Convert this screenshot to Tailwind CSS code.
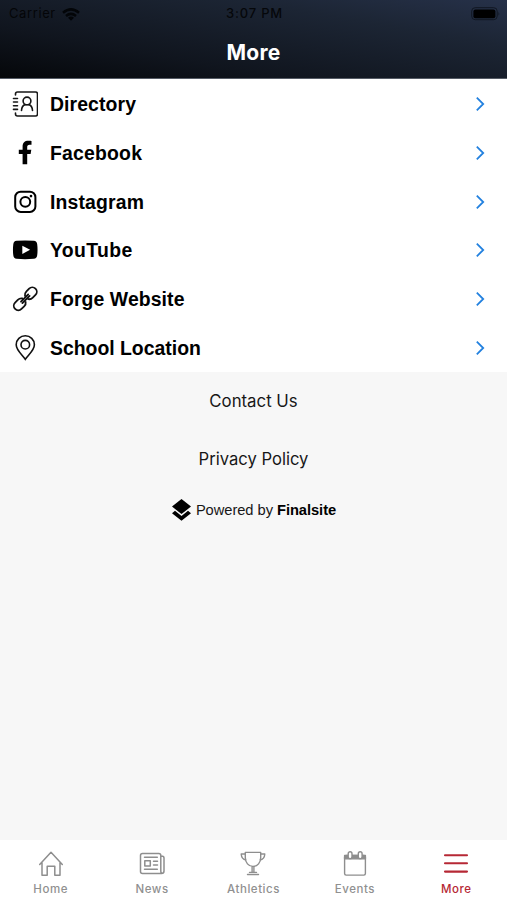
<!DOCTYPE html>
<html lang="en">
<head>
<meta charset="utf-8">
<meta name="viewport" content="width=device-width, initial-scale=1">
<title>More</title>
<script src="https://cdn.jsdelivr.net/npm/@tailwindcss/browser@4"></script>
</head>
<body class="h-[900px] w-[507px] overflow-hidden bg-[#f7f7f7] font-['Inter','Liberation_Sans',sans-serif] text-black">
<div class="flex h-full flex-col">
  <header class="h-[79px] shrink-0 border-b border-[#555b65] bg-[linear-gradient(10deg,#05070a_0%,#10151e_30%,#1c2534_72%,#263149_100%)]">
    <div class="grid h-[28px] grid-cols-3 items-center pl-[9px] pr-[7px] text-[13px] text-black/80">
      <div class="flex items-center gap-[6px]"><span class="tracking-[0.6px]">Carrier</span>
        <svg class="h-[13px] w-[18px]" viewBox="0 0 18 13" fill="none" stroke="#030508" stroke-width="2.5"><path d="M1 4.8Q9-2 17 4.8M4 8Q9 3.8 14 8"/><path d="m6 9.8 3 3 3-3Q9 7.4 6 9.8Z" fill="#030508" stroke="none"/></svg>
      </div>
      <div class="text-center font-medium tracking-[0.8px]">3:07 PM</div>
      <div class="flex justify-end"><svg class="h-[14px] w-[29px]" viewBox="0 0 29 14"><rect x=".7" y=".7" width="25.5" height="12" rx="3.5" fill="none" stroke="#111722"/><rect x="2.4" y="2.4" width="22" height="8.8" rx="2" fill="#000"/><path d="M27.5 4.8q1.5 2 0 4z" fill="#111722"/></svg></div>
    </div>
    <h1 class="pt-[11px] text-center font-['Inter'] text-[21px] leading-[28px] font-bold tracking-[0.2px] text-white">More</h1>
  </header>
  <nav class="grid h-[293px] shrink-0 grid-rows-6 bg-white pt-px font-['Liberation_Sans',Arial,sans-serif] text-[19.4px] leading-6 font-bold">
    <a class="flex items-center pl-[12px] pr-[20px]"><svg class="mr-[12px] size-[26px]" viewBox="0 0 26 26" fill="none" stroke="#161616" stroke-width="1.6" stroke-linecap="round" stroke-linejoin="round"><path d="M3.5 4V3q0-2 2-2h18q2 0 2 2v20q0 2-2 2h-18q-2 0-2-2v-1M1.5 7.5h4M1.5 11h4M1.5 14.7h4M1.5 18.4h4"/><circle cx="15" cy="10" r="3.9"/><path d="M9.5 19.5q.2-5 3.8-5.9M16.7 13.6q3.6.9 3.8 5.9"/></svg><span class="flex-1 tracking-[0.1px]">Directory</span><svg class="h-[16px] w-[12px]" viewBox="0 0 12 16" fill="none" stroke="#2381df" stroke-width="1.8"><path d="m1.8 1.7 6.4 6.3-6.4 6.3"/></svg></a>
    <a class="flex items-center pl-[12px] pr-[20px]"><svg class="mr-[12px] size-[26px]" viewBox="0 0 26 26"><path d="M10.6 24.2V14H6.8V9.8h3.8V6.6c0-3.8 2.2-5.8 5.7-5.8 1.6 0 3.2.2 3.2.2v3.8h-1.9c-1.8 0-2.4 1-2.4 2.2v2.8h4.1L18.6 14h-3.4v10.2Z"/></svg><span class="flex-1 tracking-[0.2px]">Facebook</span><svg class="h-[16px] w-[12px]" viewBox="0 0 12 16" fill="none" stroke="#2381df" stroke-width="1.8"><path d="m1.8 1.7 6.4 6.3-6.4 6.3"/></svg></a>
    <a class="flex items-center pl-[12px] pr-[20px]"><svg class="mr-[12px] size-[26px]" viewBox="0 0 26 26" fill="none" stroke="#000" stroke-width="2"><rect x="3.2" y="2.7" width="20.2" height="20.2" rx="5.5"/><circle cx="13.3" cy="12.8" r="4.9"/><circle cx="19" cy="7.1" r="1.3" fill="#000" stroke="none"/></svg><span class="flex-1 tracking-[0.15px]">Instagram</span><svg class="h-[16px] w-[12px]" viewBox="0 0 12 16" fill="none" stroke="#2381df" stroke-width="1.8"><path d="m1.8 1.7 6.4 6.3-6.4 6.3"/></svg></a>
    <a class="flex items-center pl-[12px] pr-[20px]"><svg class="mr-[12px] size-[26px]" viewBox="0 0 26 26"><path d="M4.5 3.8Q13 3 21.8 3.8q3 .3 3.4 3.5.7 5.3 0 11-.4 3.2-3.4 3.5-8.8.8-17.3 0-2.8-.3-3.2-3.5-.7-5.5 0-11 .4-3.2 3.2-3.5Z"/><path d="M10.3 8.7v8.2l7.8-4.1z" fill="#fff"/></svg><span class="flex-1 tracking-[0.35px]">YouTube</span><svg class="h-[16px] w-[12px]" viewBox="0 0 12 16" fill="none" stroke="#2381df" stroke-width="1.8"><path d="m1.8 1.7 6.4 6.3-6.4 6.3"/></svg></a>
    <a class="flex items-center pl-[12px] pr-[20px]"><svg class="mr-[12px] size-[26px]" viewBox="0 0 26 26" fill="none" stroke="#111" stroke-width="1.8" stroke-linecap="round"><g transform="rotate(-45 13.3 12.8)"><path d="M11.4 15.2Q10 17.3 7.2 17.3H3.4a4.5 4.5 0 0 1 0-9h3.8q2.8 0 4.2 2.1M15.2 10.4Q16.6 8.3 19.4 8.3h3.8a4.5 4.5 0 0 1 0 9h-3.8q-2.8 0-4.2-2.1M8.2 11.8h10.2M8.2 13.8h10.2"/></g></svg><span class="flex-1 tracking-[0.1px]">Forge Website</span><svg class="h-[16px] w-[12px]" viewBox="0 0 12 16" fill="none" stroke="#2381df" stroke-width="1.8"><path d="m1.8 1.7 6.4 6.3-6.4 6.3"/></svg></a>
    <a class="flex items-center pl-[12px] pr-[20px]"><svg class="mr-[12px] size-[26px]" viewBox="0 0 26 26" fill="none" stroke="#111" stroke-width="1.6"><path d="M13.3 24.3C10.5 20 4.2 15.2 4.2 9.7a9.1 8.9 0 0 1 18.2 0c0 5.5-6.3 10.3-9.1 14.6Z"/><circle cx="13.3" cy="9.7" r="4.3"/></svg><span class="flex-1">School Location</span><svg class="h-[16px] w-[12px]" viewBox="0 0 12 16" fill="none" stroke="#2381df" stroke-width="1.8"><path d="m1.8 1.7 6.4 6.3-6.4 6.3"/></svg></a>
  </nav>
  <main class="flex flex-1 flex-col items-center pt-[17px] text-[#171717]">
    <a class="text-[16.8px] leading-6">Contact Us</a>
    <a class="mt-[34px] text-[16.6px] leading-6">Privacy Policy</a>
    <div class="mt-[27px] flex h-6 items-center font-['Liberation_Sans',Arial,sans-serif] text-[14.7px]">
      <svg class="mr-[4px] h-[24px] w-[21px]" viewBox="0 0 21 24"><path d="m10.5 1 9.5 7.6-9.5 7.4L1 8.6ZM1 15.2l3-2.4 6.5 5.1 6.5-5.1 3 2.4-9.5 7.5Z"/></svg>
      <span class="tracking-[-0.05px]">Powered by <b class="text-black">Finalsite</b></span>
    </div>
  </main>
  <footer class="grid h-[60px] shrink-0 grid-cols-5 bg-white pt-[10px] text-[11.5px] leading-[15px] font-medium tracking-[0.55px] text-[#909090]">
    <a class="flex flex-col items-center gap-[4px]"><svg class="size-7" viewBox="0 0 28 28" fill="none" stroke="#8e8e8e" stroke-width="1.5" stroke-linejoin="round" stroke-linecap="round"><path d="M2.7 14.5 14 2.3l11.3 12.2M5 13v12.3h5.2v-9h7.6v9H23V13"/></svg>Home</a>
    <a class="flex flex-col items-center gap-[4px]"><svg class="size-7" viewBox="0 0 28 28" fill="none" stroke="#8e8e8e" stroke-width="1.5" stroke-linejoin="round" stroke-linecap="round"><path d="M22.8 21V5.5q0-2-2-2H4.5q-2 0-2 2v16q0 2 2 2h19q2.5 0 2.5-2.5V8q0-2-2.5-2M22.8 21q0 2.5 1.5 2.5M6.5 7.3h12.8M15.5 11.3h4M15.5 15h4M6.5 19.2h12.8"/><rect x="6.8" y="10.7" width="5.5" height="5.2"/></svg>News</a>
    <a class="flex flex-col items-center gap-[4px]"><svg class="size-7" viewBox="0 0 28 28" fill="none" stroke="#8e8e8e" stroke-width="1.4" stroke-linejoin="round" stroke-linecap="round"><path d="M6.3 2.4h15.4v5c0 5.2-3.2 9-7.7 9s-7.7-3.8-7.7-9ZM6.3 4H2.2q.3 5.3 4.8 6M21.7 4h4.1q-.3 5.3-4.8 6M13.1 16.5v5.5M14.9 16.5v5.5M10.5 22.4h7M8.5 24.5h11"/></svg>Athletics</a>
    <a class="flex flex-col items-center gap-[4px]"><svg class="size-7" viewBox="0 0 28 28" fill="none" stroke="#8e8e8e" stroke-width="1.4" stroke-linejoin="round"><rect x="3.6" y="5.5" width="20.8" height="19.6" rx="1.5"/><path d="M3.6 5.5h20.8v3.4H3.6z" fill="#8e8e8e"/><rect x="7.2" y="1.8" width="3.8" height="6.8" rx="1.9" fill="#fff"/><rect x="17.3" y="1.8" width="3.8" height="6.8" rx="1.9" fill="#fff"/></svg>Events</a>
    <a class="flex flex-col items-center gap-[4px] text-[#b62835]"><svg class="size-7" viewBox="0 0 28 28" stroke="#b62835" stroke-width="2.1" stroke-linecap="round"><path d="M3 5.2h22M3 13.3h22M3 21.6h22"/></svg>More</a>
  </footer>
</div>
</body>
</html>
